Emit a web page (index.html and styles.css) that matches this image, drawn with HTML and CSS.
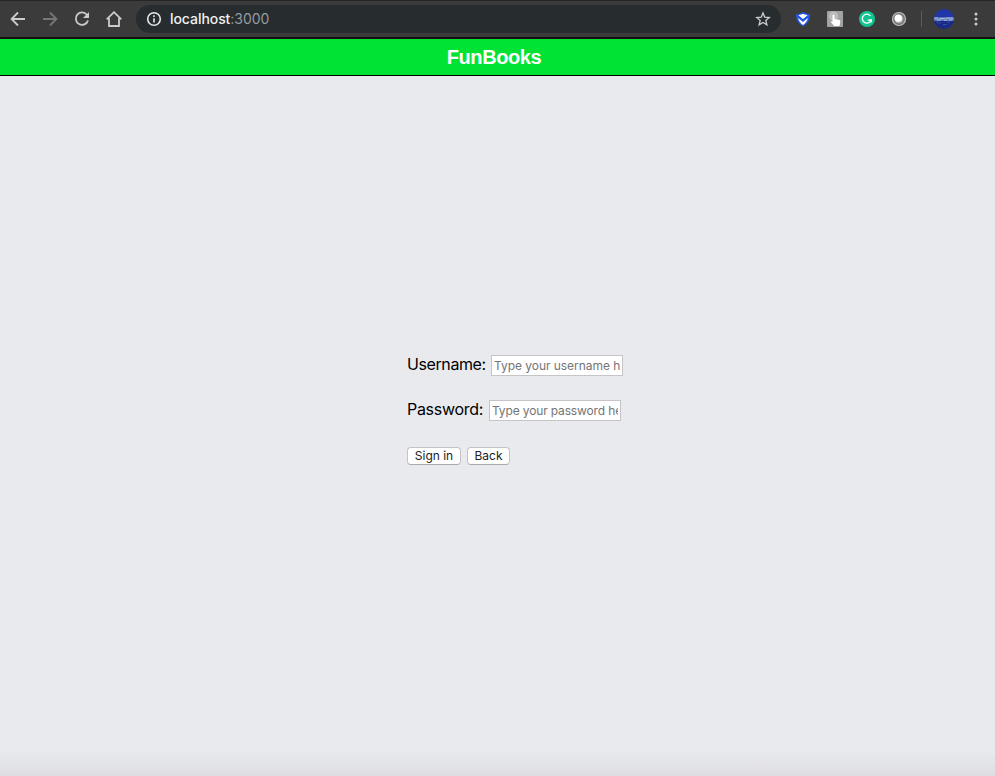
FILE: index.html
```html
<!DOCTYPE html>
<html lang="en">
<head>
<meta charset="utf-8">
<title>FunBooks</title>
<link rel="stylesheet" href="styles.css">
</head>
<body>
<div class="toolbar">
  <svg class="icon nav" viewBox="0 0 16 16"><path d="M15 8H2M8 1.5 1.6 8 8 14.5"/></svg>
  <svg class="icon nav disabled" viewBox="0 0 16 16"><path d="M1 8h13M8 1.5 14.4 8 8 14.5"/></svg>
  <svg class="icon nav" viewBox="0 0 16 16"><path d="M13.2 4.2A6.2 6.2 0 1 0 14 9.4"/><path class="solid" d="M15 1v6H9z"/></svg>
  <svg class="icon nav" viewBox="0 0 16 16"><path d="M.7 8.4 8 1.2l7.3 7.2M3 7v8h10V7"/></svg>
  <div class="address">
    <svg class="icon info" viewBox="0 0 16 16"><circle cx="8" cy="8" r="6.3"/><path d="M8 7.2v4.3M8 4.2v1.8"/></svg>
    <span class="url"><span class="host">localhost</span>:3000</span>
    <svg class="icon star" viewBox="0 0 16 16"><path d="m8 1.900 1.700 4.200 4.600.4-3.500 3 1.100 4.400L8 11.500l-3.900 2.400 1.100-4.400-3.500-3 4.600-.4z"/></svg>
  </div>
  <div class="extensions">
    <svg viewBox="0 0 16 16"><path fill="#2458e8" d="M1 3.500Q5 2.600 8 1q3 1.600 7 2.500C15 9 12.500 13 8 15.500 3.500 13 1 9 1 3.500z"/><path fill="#fff" d="M3 4.300 8 3l5 1.300-5 4.200z"/><path fill="#fff" d="m3.100 7 4.900 4 4.900-4c-.7 3-2.500 5.400-4.900 7-2.400-1.600-4.200-4-4.900-7z"/><path fill="none" stroke="#2458e8" stroke-width="1.600" d="m2.500 4.500 5.500 4.600 5.500-4.600"/></svg>
    <svg viewBox="0 0 16 16"><rect width="16" height="16" rx="1" fill="#a2a2a2"/><circle cx="6.500" cy="5" r="4" fill="#b8b8b8" stroke="#cecece" stroke-width=".7"/><path fill="#fff" d="M5.500 4.500q0-1 1-1t1 1V8l4.500.8q1.500.5 1.300 2L12.500 15H7.200l-3.500-4 .8-.8 1 .6z"/></svg>
    <svg viewBox="0 0 16 16"><circle cx="8" cy="8" r="8" fill="#12c48f"/><path fill="none" stroke="#fff" stroke-width="1.300" d="M11.500 5A4.500 4.500 0 1 0 12 9.200H8.600M12.200 8v3.500"/></svg>
    <svg viewBox="0 0 16 16"><circle cx="8" cy="8" r="6.500" fill="#707070" stroke="#c2c2c2" stroke-width="1.200"/><circle cx="8" cy="8" r="4.500" fill="#a8a8a8"/><circle cx="7.300" cy="7.200" r="3.700" fill="#fff"/></svg>
  </div>
  <span class="divider"></span>
  <svg class="avatar" viewBox="0 0 20 20"><defs><clipPath id="disc"><circle cx="10" cy="10" r="10"/></clipPath></defs><g clip-path="url(#disc)"><path fill="#2036a8" d="M0 0h20v20H0z"/><path fill="#1b2a86" d="M0 12h20v8H0z"/><path fill="#6d84c2" d="M0 8.300h20v3.400H0z"/><path stroke="#a5b6dc" stroke-width="1" d="M0 9h4m2 .5h5m1-.5h7M3 11h4m3 .3h3m2-.3h3"/><path stroke="#3a50a5" d="M4 14h3m2 1.500h4M2 13h2m9 0h3"/></g></svg>
  <svg class="more" viewBox="0 0 4 14"><circle cx="2" cy="2" r="1.500"/><circle cx="2" cy="7" r="1.500"/><circle cx="2" cy="12" r="1.500"/></svg>
</div>
<header class="banner"><h1>FunBooks</h1></header>
<main>
  <form class="login">
    <div class="row"><label class="user-label" for="user">Username:</label><input id="user" type="text" placeholder="Type your username here"></div>
    <div class="row"><label class="pass-label" for="pass">Password:</label><input id="pass" class="pass" type="password" placeholder="Type your password here"></div>
    <div class="actions"><button class="signin" type="button">Sign in</button><button class="back" type="button">Back</button></div>
  </form>
</main>
</body>
</html>
```
FILE: styles.css
```css
* { box-sizing: border-box; }
body {
  margin: 0;
  height: 776px;
  display: flex;
  flex-direction: column;
  overflow: hidden;
  background: #e9eaee;
  font-family: Inter, "Liberation Sans", sans-serif;
}
.toolbar {
  height: 39px;
  flex: none;
  display: flex;
  align-items: center;
  padding: 0 17px 0 10px;
  background: #3b3b3b;
  border-top: 1px solid #252525;
  border-bottom: 2px solid #111;
}
.icon { fill: none; stroke: #c9cbcc; stroke-width: 1.8; flex: none; }
.nav { width: 16px; height: 16px; margin-right: 16px; }
.disabled { stroke: #777; }
.solid { fill: #c9cbcc; stroke: none; }
.address {
  width: 645px;
  height: 28px;
  margin-left: -2px;
  border-radius: 14px;
  background: #272c2f;
  display: flex;
  align-items: center;
  padding: 0 10px;
}
.info { width: 16px; height: 16px; stroke: #e4e6e8; stroke-width: 1.6; }
.url {
  flex: 1;
  margin-left: 8px;
  padding-bottom: 1px;
  font-size: 14px;
  letter-spacing: -0.06px;
  color: #969ba0;
}
.host { color: #f0f1f2; font-weight: 500; }
.star { width: 16px; height: 16px; stroke-width: 1.3; }
.extensions { display: flex; gap: 16px; margin-left: 14px; }
.extensions svg { width: 16px; height: 16px; }
.divider { width: 1px; height: 16px; margin-left: 14px; background: #5c5c5c; }
.avatar { width: 20px; height: 20px; margin-left: 12px; }
.more { width: 4px; height: 14px; margin-left: auto; fill: #c9cbcc; }
.banner {
  height: 37px;
  flex: none;
  background: #00e334;
  border-bottom: 1px solid #000;
  text-align: center;
}
h1 {
  margin: 0;
  padding-right: 7px;
  font-size: 20px;
  line-height: 36px;
  font-weight: 700;
  letter-spacing: -0.4px;
  color: #fff;
  font-family: "Liberation Sans", sans-serif;
}
main {
  flex: 1;
  padding: 279px 0 0 407px;
  background: linear-gradient(transparent calc(100% - 26px), #dedee2);
}
.row { display: flex; align-items: center; height: 21px; margin-bottom: 24px; }
label {
  padding-bottom: 3px;
  font-size: 16px;
  line-height: 20px;
  letter-spacing: -0.4px;
  white-space: nowrap;
}
.user-label { width: 79px; }
.pass-label { width: 77px; letter-spacing: -0.3px; }
input {
  width: 132px;
  height: 21px;
  margin: 0 0 0 5px;
  padding: 1px 2px;
  border: 1px solid #c5c5c7;
  background: #fff;
  font: 12px Inter, sans-serif;
}
input::placeholder { color: #757575; }
.pass { letter-spacing: -0.14px; }
#user { letter-spacing: -0.04px; }
.actions { display: flex; gap: 6px; margin-top: 26px; }
button {
  height: 18px;
  padding: 0;
  border: 1px solid #c3c3c5;
  border-bottom-color: #aaaaac;
  border-radius: 4px;
  background: #fff;
  color: #222;
  font: 12px/14px Inter, sans-serif;
}
.signin { width: 54px; }
.back { width: 43px; }
```
